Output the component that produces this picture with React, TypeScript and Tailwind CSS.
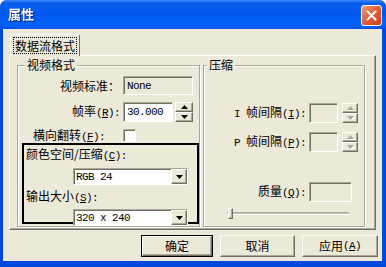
import React from "react";

const raised =
  "border border-t-white border-l-white border-r-[#716F64] border-b-[#716F64] shadow-[inset_-1px_-1px_0_#ACA899] bg-[#ECE9D8]";
const sunken =
  "border border-t-[#ACA899] border-l-[#ACA899] border-r-white border-b-white shadow-[inset_1px_1px_0_#716F64]";

// SimSun-like half-width latin
const L: React.FC<{ children: React.ReactNode }> = ({ children }) => (
  <span className="font-['Liberation_Mono',monospace] text-[11px] tracking-[-0.6px]">{children}</span>
);

const Key: React.FC<{ k: string; colon?: boolean }> = ({ k, colon = true }) => (
  <L>
    (<u>{k}</u>){colon ? ":" : ""}
  </L>
);

const Arrow: React.FC<{ up?: boolean; disabled?: boolean }> = ({ up, disabled }) => (
  <svg width="7" height="4" viewBox="0 0 7 4" className={disabled ? "drop-shadow-[1px_1px_0_#fff]" : ""}>
    <polygon points={up ? "3.5,0 7,4 0,4" : "0,0 7,0 3.5,4"} fill={disabled ? "#ACA899" : "#000"} />
  </svg>
);

const Spin: React.FC<{ w: string; disabled?: boolean }> = ({ w, disabled }) => (
  <div className={`flex flex-col h-[20px] ${w}`}>
    <div className={`${raised} h-[10px] flex items-center justify-center`}>
      <Arrow up disabled={disabled} />
    </div>
    <div className={`${raised} h-[10px] flex items-center justify-center`}>
      <Arrow disabled={disabled} />
    </div>
  </div>
);

const Combo: React.FC<{ value: string }> = ({ value }) => (
  <div className={`ml-[47px] flex h-[17px] w-[115px] bg-white ${sunken}`}>
    <div className="flex-1 pl-[2px] flex items-center text-black">
      <L>{value}</L>
    </div>
    <div className={`${raised} w-[16px] h-full flex items-center justify-center`}>
      <Arrow />
    </div>
  </div>
);

const App: React.FC = () => {
  return (
    <div className="w-[386px] h-[267px] bg-[#0349DE] rounded-t-[7px] flex flex-col overflow-hidden font-['Noto_Sans_CJK_SC',sans-serif] text-[12px] leading-[14px] text-black">
      {/* title bar */}
      <div className="h-[29px] shrink-0 flex items-start justify-between pl-[8px] pr-[4px] bg-[linear-gradient(180deg,#3C8CF8_0%,#0A5FEE_10%,#0058EE_45%,#0062F8_85%,#0052E8_100%)]">
        <span className="mt-[6px] text-white font-bold text-[13px] leading-[16px] drop-shadow-[1px_1px_0_#0A1E8A]">
          属性
        </span>
        <div className="mt-[5px] w-[21px] h-[21px] rounded-[3px] border border-white bg-[linear-gradient(135deg,#F0A080_0%,#E06038_45%,#C8401C_100%)] flex items-center justify-center">
          <svg width="11" height="11" viewBox="0 0 11 11">
            <path d="M1.5 1.5 L9.5 9.5 M9.5 1.5 L1.5 9.5" stroke="#fff" strokeWidth="2" strokeLinecap="square" />
          </svg>
        </div>
      </div>

      {/* body */}
      <div className="ml-[3px] w-[379px] h-[232px] bg-[#ECE9D8] pt-[5px] pl-[6px]">
        {/* tab */}
        <div className="flex h-[21px]">
          <div className="relative z-10 ml-[1px] h-[22px] px-[2px] pt-[2px] border-t border-l border-r border-t-white border-l-white border-r-[#716F64] rounded-t-[2px] bg-[#ECE9D8]">
            <span className="block border border-dotted border-black px-[1px] leading-[15px]">数据流格式</span>
          </div>
        </div>

        {/* tab panel */}
        <div className="w-[367px] h-[175px] border border-t-white border-l-white border-r-[#716F64] border-b-[#716F64] shadow-[inset_-1px_-1px_0_#ACA899] flex pt-[9px] pl-[7px] gap-[3px]">
          {/* video format group */}
          <div className="relative w-[183px] h-[162px] border border-[#ACA899] shadow-[inset_1px_1px_0_#fff,1px_1px_0_#fff] flex flex-col">
            <span className="absolute -top-[8px] left-[7px] px-[2px] bg-[#ECE9D8]">视频格式</span>

            <div className="mt-[10px] flex items-center h-[19px]">
              <span className="w-[102px] text-right">视频标准：</span>
              <div className={`ml-[3px] w-[70px] h-[19px] ${sunken} flex items-center pl-[3px]`}>
                <L>None</L>
              </div>
            </div>

            <div className="mt-[7px] flex items-center h-[20px]">
              <span className="w-[102px] text-right">
                帧率<Key k="R" />
              </span>
              <div className={`ml-[3px] w-[50px] h-[20px] bg-white ${sunken} flex items-center pl-[3px]`}>
                <L>30.000</L>
              </div>
              <Spin w="ml-[2px] w-[18px]" />
            </div>

            <div className="mt-[7px] flex items-center h-[13px]">
              <span className="w-[105px] pl-[15px]">
                横向翻转<Key k="F" />
              </span>
              <div className={`w-[13px] h-[13px] bg-white ${sunken}`} />
            </div>

            <div className="mt-[1px] ml-[4px] w-[177px] h-[81px] border-2 border-black flex flex-col pt-[2px] pl-[2px]">
              <span>
                颜色空间/压缩<Key k="C" />
              </span>
              <div className="mt-[5px]">
                <Combo value="RGB 24" />
              </div>
              <span className="mt-[4px]">
                输出大小<Key k="S" />
              </span>
              <div className="mt-[4px]">
                <Combo value="320 x 240" />
              </div>
            </div>
          </div>

          {/* compression group */}
          <div className="relative w-[162px] h-[162px] border border-[#ACA899] shadow-[inset_1px_1px_0_#fff,1px_1px_0_#fff] flex flex-col">
            <span className="absolute -top-[8px] left-[3px] px-[2px] bg-[#ECE9D8]">压缩</span>

            <div className="mt-[37px] flex items-center h-[20px]">
              <span className="w-[102px] text-right">
                <L>I </L>帧间隔<Key k="I" />
              </span>
              <div className={`ml-[3px] w-[29px] h-[20px] ${sunken}`} />
              <Spin w="ml-[4px] w-[16px]" disabled />
            </div>

            <div className="mt-[9px] flex items-center h-[20px]">
              <span className="w-[102px] text-right">
                <L>P </L>帧间隔<Key k="P" />
              </span>
              <div className={`ml-[3px] w-[29px] h-[20px] ${sunken}`} />
              <Spin w="ml-[4px] w-[16px]" disabled />
            </div>

            <div className="mt-[30px] flex items-center h-[20px]">
              <span className="w-[102px] text-right">
                质量<Key k="Q" />
              </span>
              <div className={`ml-[3px] w-[43px] h-[20px] ${sunken}`} />
            </div>

            <div className="relative mt-[6px] ml-[23px] w-[122px] h-[11px]">
              <div className="mt-[4px] h-[3px] border-t border-t-[#ACA899] border-b border-b-white bg-[#716F64]/30" />
              <div className={`absolute left-[1px] top-0 w-[5px] h-[11px] ${raised}`} />
            </div>
          </div>
        </div>

        {/* buttons */}
        <div className="mt-[5px] flex pl-[132px]">
          <div className="w-[72px] h-[22px] border border-black">
            <div className={`${raised} w-full h-full flex items-center justify-center`}>确定</div>
          </div>
          <div className={`${raised} ml-[7px] w-[75px] h-[22px] flex items-center justify-center`}>取消</div>
          <div className={`${raised} ml-[7px] w-[76px] h-[22px] flex items-center justify-center`}>
            应用<Key k="A" colon={false} />
          </div>
        </div>
      </div>
    </div>
  );
};

export default App;
